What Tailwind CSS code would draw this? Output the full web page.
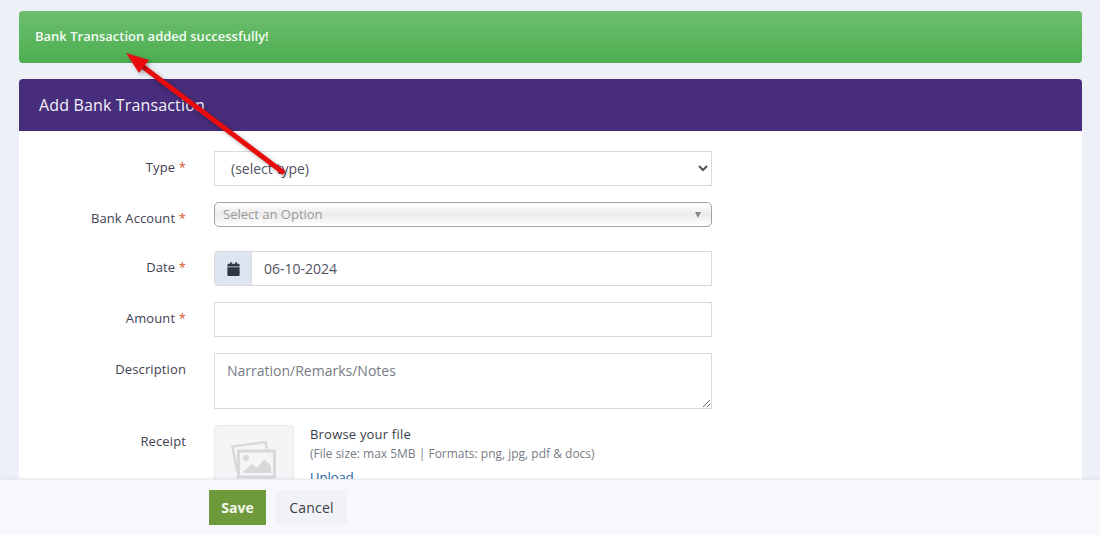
<!DOCTYPE html>
<html lang="en">
<head>
    <meta charset="UTF-8">
    <meta name="viewport" content="width=device-width, initial-scale=1.0">
    <title>Add Bank Transaction</title>
    <script src="https://cdn.jsdelivr.net/npm/@tailwindcss/browser@4"></script>
</head>
<body class="relative h-[535px] overflow-hidden bg-[#eef0f8] font-['Open_Sans',sans-serif] text-[13px] tracking-[0.12px] text-[#3f4254]">
    <main class="pt-[11px] pl-[19px] pr-[18px]">
        <!-- Alert -->
        <div class="flex h-[52px] items-center rounded-[4px] bg-gradient-to-b from-[#6cbf6f] to-[#4cae50] pl-4 text-[13px] font-semibold tracking-normal text-[#f4fbf4]">
            Bank Transaction added successfully!
        </div>

        <!-- Card -->
        <section class="mt-4 rounded-t-[4px] bg-white">
            <header class="flex h-[52px] items-center rounded-t-[4px] bg-[#472d7b] pl-5 text-base font-medium tracking-[0.15px] text-[#f4f2f9]">
                Add Bank Transaction
            </header>

            <form class="flex flex-col pt-5">
                <!-- Type -->
                <div class="flex h-[35px]">
                    <label class="w-[167px] pt-[7px] text-right">Type <span class="text-[#d9512c]">*</span></label>
                    <select class="ml-[28px] h-[35px] w-[498px] border border-[#d8dade] bg-white pl-3 text-sm tracking-normal text-[#50535f]">
                        <option>(select type)</option>
                    </select>
                </div>

                <!-- Bank Account -->
                <div class="mt-4 flex h-[25px]">
                    <label class="w-[167px] pt-[7px] text-right">Bank Account <span class="text-[#d9512c]">*</span></label>
                    <div class="ml-[28px] flex h-[25px] w-[498px] items-center justify-between rounded-[5px] border border-[#a3a3a3] bg-gradient-to-b from-white via-[#ececec] to-white pr-[10px] pl-2 text-[13px] tracking-normal text-[#999]">
                        <span>Select an Option</span>
                        <span class="h-0 w-0 border-x-[3.5px] border-t-[6px] border-x-transparent border-t-[#888]"></span>
                    </div>
                </div>

                <!-- Date -->
                <div class="mt-6 flex h-[35px]">
                    <label class="w-[167px] pt-[7px] text-right">Date <span class="text-[#d9512c]">*</span></label>
                    <div class="ml-[28px] flex h-[35px] w-[498px]">
                        <span class="flex w-[38px] items-center justify-center rounded-l-[4px] border border-[#d8dade] bg-[#dfe5f0]">
                            <svg class="h-[14px] w-[13px] fill-[#2f3542]" viewBox="0 0 448 512"><path d="M96 32V64H48C21.500 64 0 85.500 0 112v48H448V112c0-26.500-21.500-48-48-48H352V32c0-17.700-14.300-32-32-32s-32 14.300-32 32V64H160V32c0-17.700-14.300-32-32-32S96 14.300 96 32zM448 192H0V464c0 26.500 21.500 48 48 48H400c26.500 0 48-21.500 48-48V192z"/></svg>
                        </span>
                        <input type="text" value="06-10-2024" class="-ml-px flex-1 border border-[#d8dade] pl-3 text-sm tracking-normal text-[#50535f]">
                    </div>
                </div>

                <!-- Amount -->
                <div class="mt-4 flex h-[35px]">
                    <label class="w-[167px] pt-[7px] text-right">Amount <span class="text-[#d9512c]">*</span></label>
                    <input type="text" class="ml-[28px] h-[35px] w-[498px] border border-[#d8dade] px-3 text-sm">
                </div>

                <!-- Description -->
                <div class="mt-4 flex h-[56px]">
                    <label class="w-[167px] pt-[7px] text-right">Description</label>
                    <textarea placeholder="Narration/Remarks/Notes" class="ml-[28px] h-[56px] w-[498px] border border-[#d8dade] px-3 py-[7px] text-sm tracking-normal text-[#50535f] placeholder:text-[#777c85]"></textarea>
                </div>

                <!-- Receipt -->
                <div class="mt-4 flex h-[120px]">
                    <label class="w-[167px] pt-[7px] text-right">Receipt</label>
                    <div class="ml-[28px] flex">
                        <div class="flex h-[108px] w-[80px] justify-center rounded-[4px] border border-[#eaebee] bg-[#f4f5f7] pt-[15px]">
                            <svg class="h-[38px] w-[46px] fill-none stroke-[#d8d9db]" viewBox="0 0 46 38">
                                <path d="M6 30 L1.500 5.500 L34.500 1 L36 8" stroke-width="2.500"/>
                                <rect x="7.500" y="10" width="36" height="26" stroke-width="3"/>
                                <circle cx="15" cy="17" r="3" class="fill-[#d8d9db] stroke-none"/>
                                <path d="M12 31 L21 23 L26 27 L33 18 L40 25 V32 H12 Z" class="fill-[#d8d9db] stroke-none"/>
                            </svg>
                        </div>
                        <div class="ml-4 flex flex-col">
                            <span class="text-[13px] font-medium leading-[18px] tracking-[0.2px] text-[#3a3d47]">Browse your file</span>
                            <span class="mt-[2px] text-xs leading-[18px] tracking-normal text-[#777c85]">(File size: max 5MB | Formats: png, jpg, pdf &amp; docs)</span>
                            <a href="#" class="mt-[5px] text-[13px] leading-[18px] tracking-normal text-[#1c5fa8]">Upload</a>
                        </div>
                    </div>
                </div>
            </form>
        </section>
    </main>

    <!-- Sticky action bar -->
    <footer class="absolute inset-x-0 bottom-0 flex h-[56px] items-center gap-[10px] border-t border-[#e9ebf1] bg-[#f6f8fc] pl-[209px] shadow-[0_-1px_3px_rgba(0,0,0,0.06)]">
        <button type="button" class="h-[35px] w-[57px] bg-[#6f9a3c] text-sm font-bold tracking-normal text-[#f4f8ee]">Save</button>
        <button type="button" class="h-[35px] w-[71px] bg-[#f0f2f6] text-sm font-medium tracking-[0.2px] text-[#3a3d47]">Cancel</button>
    </footer>

    <!-- Annotation arrow drawn over the screenshot -->
    <svg class="pointer-events-none absolute top-0 left-0 h-[535px] w-[1100px]" viewBox="0 0 1100 535">
        <path d="M284 173 L142 66" stroke="#e90c0f" stroke-width="5" fill="none" class="drop-shadow-[2px_2px_2px_rgba(0,0,0,0.3)]"/>
        <path d="M126 53 L149 60 L139 73 Z" fill="#e90c0f" class="drop-shadow-[2px_2px_2px_rgba(0,0,0,0.3)]"/>
    </svg>
</body>
</html>
